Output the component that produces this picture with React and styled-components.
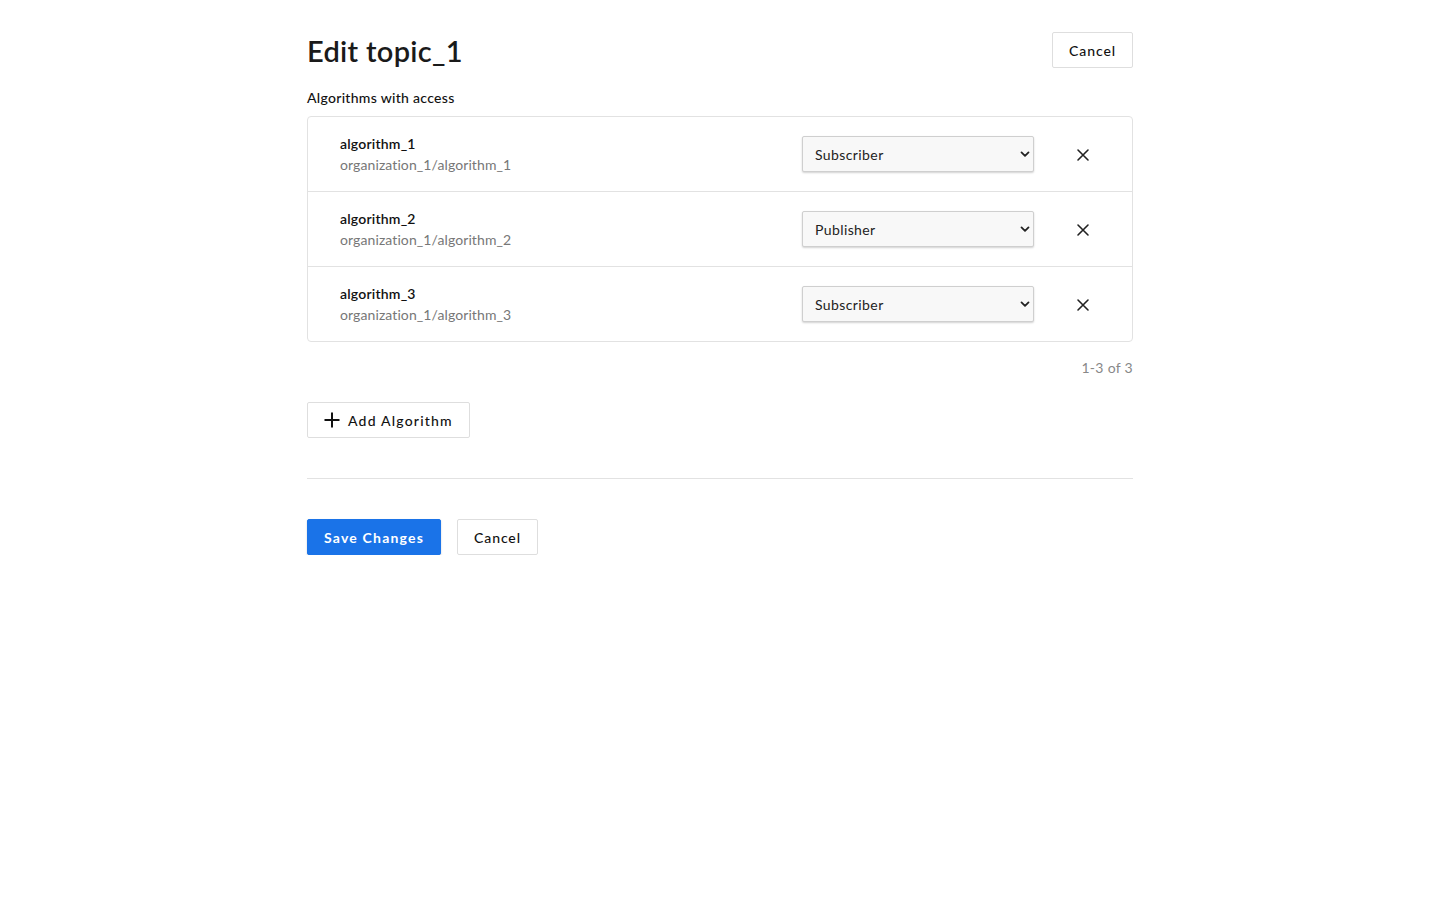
import React from "react";
import styled, { createGlobalStyle } from "styled-components";

const GlobalStyle = createGlobalStyle`
  body {
    margin: 0;
    background: #ffffff;
    font-family: "Lato", "Open Sans", sans-serif;
    color: #1a1a1a;
  }
`;

const algorithms = [
  { name: "algorithm_1", path: "organization_1/algorithm_1", role: "Subscriber" },
  { name: "algorithm_2", path: "organization_1/algorithm_2", role: "Publisher" },
  { name: "algorithm_3", path: "organization_1/algorithm_3", role: "Subscriber" },
];

function CloseIcon() {
  return (
    <svg width="14" height="14" viewBox="0 0 14 14">
      <path d="M2 2 L12 12 M12 2 L2 12" stroke="#222" strokeWidth="1.6" strokeLinecap="round" />
    </svg>
  );
}

function PlusIcon() {
  return (
    <svg width="18" height="18" viewBox="0 0 18 18">
      <path d="M9 1.5 V16.5 M1.5 9 H16.5" stroke="#111" strokeWidth="2" />
    </svg>
  );
}

function Chevron() {
  return (
    <svg width="10" height="7" viewBox="0 0 10 7">
      <path d="M1.5 1.5 L5 5 L8.5 1.5" fill="none" stroke="#222" strokeWidth="1.8" strokeLinecap="round" strokeLinejoin="round" />
    </svg>
  );
}

export default function App() {
  return (
    <>
      <GlobalStyle />
      <Wrapper>
        <Header>
          <Title>Edit topic_1</Title>
          <Button>Cancel</Button>
        </Header>

        <Label>Algorithms with access</Label>
        <List>
          {algorithms.map((a) => (
            <Row key={a.name}>
              <Info>
                <Name>{a.name}</Name>
                <Path>{a.path}</Path>
              </Info>
              <SelectWrapper>
                <Select defaultValue={a.role}>
                  <option>Subscriber</option>
                  <option>Publisher</option>
                </Select>
                <ChevronWrap>
                  <Chevron />
                </ChevronWrap>
              </SelectWrapper>
              <RemoveBtn aria-label="remove">
                <CloseIcon />
              </RemoveBtn>
            </Row>
          ))}
        </List>
        <Pagination>1-3 of 3</Pagination>

        <AddButton>
          <PlusIcon />
          Add Algorithm
        </AddButton>

        <Divider />

        <Actions>
          <Button primary>Save Changes</Button>
          <Button>Cancel</Button>
        </Actions>
      </Wrapper>
    </>
  );
}

const Wrapper = styled.div`
  width: 826px;
  margin: 0 auto;
  padding-top: 32px;
`;

const Header = styled.div`
  display: flex;
  align-items: center;
  justify-content: space-between;
  height: 36px;
`;

const Title = styled.h1`
  margin: 0;
  padding-top: 2px;
  font-size: 29px;
  line-height: 32px;
  font-weight: 600;
  letter-spacing: 0.3px;
  color: #1a1a1a;
`;

const Button = styled.button`
  height: 36px;
  padding: 0 16px;
  border-radius: 2px;
  border: 1px solid ${(p) => (p.primary ? "#1a73e8" : "#dedede")};
  background: ${(p) => (p.primary ? "#1a73e8" : "#ffffff")};
  color: ${(p) => (p.primary ? "#ffffff" : "#111111")};
  font-family: "Lato", sans-serif;
  font-size: 14px;
  font-weight: ${(p) => (p.primary ? 700 : 500)};
  letter-spacing: ${(p) => (p.primary ? "1.2px" : "0.9px")};
  cursor: pointer;
  box-shadow: ${(p) => (p.primary ? "0 1px 2px rgba(0,0,0,0.2)" : "none")};
`;

const Label = styled.div`
  margin-top: 20px;
  font-size: 14px;
  line-height: 20px;
  font-weight: 500;
  letter-spacing: 0.3px;
  color: #111;
`;

const List = styled.div`
  margin-top: 8px;
  border: 1px solid #e2e2e2;
  border-radius: 4px;
`;

const Row = styled.div`
  display: flex;
  align-items: center;
  height: 74px;
  padding-left: 32px;
  padding-right: 42px;
  border-bottom: 1px solid #e2e2e2;
  &:last-child {
    border-bottom: none;
  }
`;

const Info = styled.div`
  flex: 1;
  display: flex;
  flex-direction: column;
  gap: 1px;
`;

const Name = styled.div`
  font-size: 14px;
  line-height: 20px;
  font-weight: 600;
  color: #111;
  letter-spacing: 0.2px;
`;

const Path = styled.div`
  font-size: 14px;
  line-height: 20px;
  color: #777;
  letter-spacing: 0.1px;
`;

const SelectWrapper = styled.div`
  position: relative;
  width: 232px;
  height: 36px;
  margin-right: 42px;
`;

const Select = styled.select`
  appearance: none;
  width: 100%;
  height: 100%;
  padding: 0 12px;
  border: 1px solid #cfcfcf;
  border-radius: 2px;
  background: #f8f8f8;
  box-shadow: 0 1px 2px rgba(0, 0, 0, 0.18);
  font-family: "Lato", sans-serif;
  font-size: 14px;
  letter-spacing: 0.4px;
  color: #222;
  outline: none;
`;

const ChevronWrap = styled.span`
  position: absolute;
  right: 4px;
  top: 50%;
  transform: translateY(-45%);
  display: flex;
  pointer-events: none;
`;

const RemoveBtn = styled.button`
  display: flex;
  align-items: center;
  justify-content: center;
  width: 14px;
  height: 14px;
  padding: 0;
  margin-top: 2px;
  border: none;
  background: none;
  cursor: pointer;
`;

const Pagination = styled.div`
  margin-top: 16px;
  text-align: right;
  font-size: 14px;
  line-height: 20px;
  color: #888;
  letter-spacing: 0.3px;
`;

const AddButton = styled(Button)`
  margin-top: 24px;
  display: inline-flex;
  align-items: center;
  gap: 7px;
  padding: 0 16px 0 15px;
  letter-spacing: 1.2px;
`;

const Divider = styled.hr`
  margin: 40px 0 0;
  border: none;
  border-top: 1px solid #e2e2e2;
`;

const Actions = styled.div`
  display: flex;
  gap: 16px;
  margin-top: 40px;
`;
